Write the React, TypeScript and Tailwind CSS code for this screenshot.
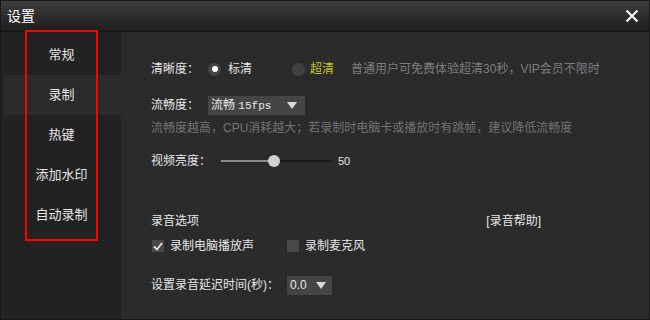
import React from "react";

const menu = ["常规", "录制", "热键", "添加水印", "自动录制"];

export default function App() {
  return (
    <div
      className="w-[650px] h-[320px] flex flex-col bg-[#2b2b2b] border border-[#1a1a1a] overflow-hidden text-[12px] text-[#e6e6e6]"
      style={{ fontFamily: '"Liberation Sans", "Noto Sans CJK SC", sans-serif' }}
    >
      {/* title bar */}
      <div className="h-[31px] shrink-0 flex items-center justify-between pl-[6px] pr-[10px] bg-gradient-to-b from-[#3e3e3e] to-[#1e1e1e] border-b border-[#161616]">
        <span className="text-[14px] text-white">设置</span>
        <svg width="14" height="14" viewBox="0 0 14 14">
          <path d="M1.5 1.5 L12.5 12.5 M12.5 1.5 L1.5 12.5" stroke="#f2f2f2" strokeWidth="2.2" />
        </svg>
      </div>

      <div className="flex flex-1">
        {/* sidebar */}
        <div className="w-[120px] shrink-0 bg-[#222222] pl-[3px] pt-[3px] relative text-[13px]">
          <div className="absolute left-[24px] top-[-2px] w-[73px] h-[211px] border-2 border-[#ff0000]" />
          {menu.map((m, i) => (
            <div
              key={m}
              className={`h-[40px] flex items-center justify-center pr-[2px] ${i === 1 ? "bg-[#2b2b2b]" : ""}`}
            >
              {m}
            </div>
          ))}
        </div>

        {/* content */}
        <div className="flex-1 pl-[30px] pt-[27px] flex flex-col">
          <div className="flex items-center h-[20px]">
            <span className="w-[56px]">清晰度：</span>
            <span className="w-[13px] h-[13px] rounded-full bg-[#444444] flex items-center justify-center ml-[1px]">
              <span className="w-[6px] h-[6px] rounded-full bg-white" />
            </span>
            <span className="ml-[7px]">标清</span>
            <span className="w-[13px] h-[13px] rounded-full bg-[#414141] ml-[40px]" />
            <span className="ml-[5px] text-[#c9c81a]">超清</span>
            <span className="ml-[17px] text-[#7d7d7d]">普通用户可免费体验超清30秒，VIP会员不限时</span>
          </div>

          <div className="flex items-center h-[20px] mt-[16px]">
            <span className="w-[57px]">流畅度：</span>
            <div className="w-[97px] h-[19px] bg-[#454545] flex items-center justify-between pl-[3px] pr-[8px]">
              <span>
                流畅 <span style={{ fontFamily: '"Liberation Mono", monospace' }} className="text-[11px]">15fps</span>
              </span>
              <svg width="10" height="7" viewBox="0 0 10 7">
                <path d="M0 0 H10 L5 7 Z" fill="#dcdcdc" />
              </svg>
            </div>
          </div>
          <div className="h-[20px] flex items-center mt-[3px] text-[#727272]">
            流畅度越高，CPU消耗越大；若录制时电脑卡或播放时有跳帧，建议降低流畅度
          </div>

          <div className="flex items-center h-[20px] mt-[13px]">
            <span className="w-[70px]">视频亮度：</span>
            <div className="relative w-[111px] h-[14px] flex items-center">
              <div className="h-[2px] w-[53px] bg-[#8a8a8a]" />
              <div className="h-[2px] flex-1 bg-[#1c1c1c]" />
              <div className="absolute left-[47px] top-[1px] w-[12px] h-[12px] rounded-full bg-[#d0d0d0]" />
            </div>
            <span className="ml-[6px] text-[11px]">50</span>
          </div>

          <div className="flex items-center h-[20px] mt-[40px] pr-[108px] justify-between">
            <span>录音选项</span>
            <span>[录音帮助]</span>
          </div>

          <div className="flex items-center h-[20px] mt-[5px]">
            <span className="w-[12px] h-[12px] bg-[#484848] flex items-center justify-center ml-[1px]">
              <svg width="10" height="9" viewBox="0 0 10 9">
                <path d="M1 4.5 L4 7.5 L9 1" stroke="#f4e8ea" strokeWidth="1.8" fill="none" />
              </svg>
            </span>
            <span className="ml-[6px]">录制电脑播放声</span>
            <span className="w-[12px] h-[12px] bg-[#484848] ml-[33px]" />
            <span className="ml-[6px]">录制麦克风</span>
          </div>

          <div className="flex items-center h-[20px] mt-[19px]">
            <span className="w-[136px]">设置录音延迟时间(秒)：</span>
            <div className="w-[45px] h-[19px] bg-[#454545] flex items-center justify-between pl-[3px] pr-[6px]">
              <span>0.0</span>
              <svg width="10" height="7" viewBox="0 0 10 7">
                <path d="M0 0 H10 L5 7 Z" fill="#dcdcdc" />
              </svg>
            </div>
          </div>
        </div>
      </div>
    </div>
  );
}
